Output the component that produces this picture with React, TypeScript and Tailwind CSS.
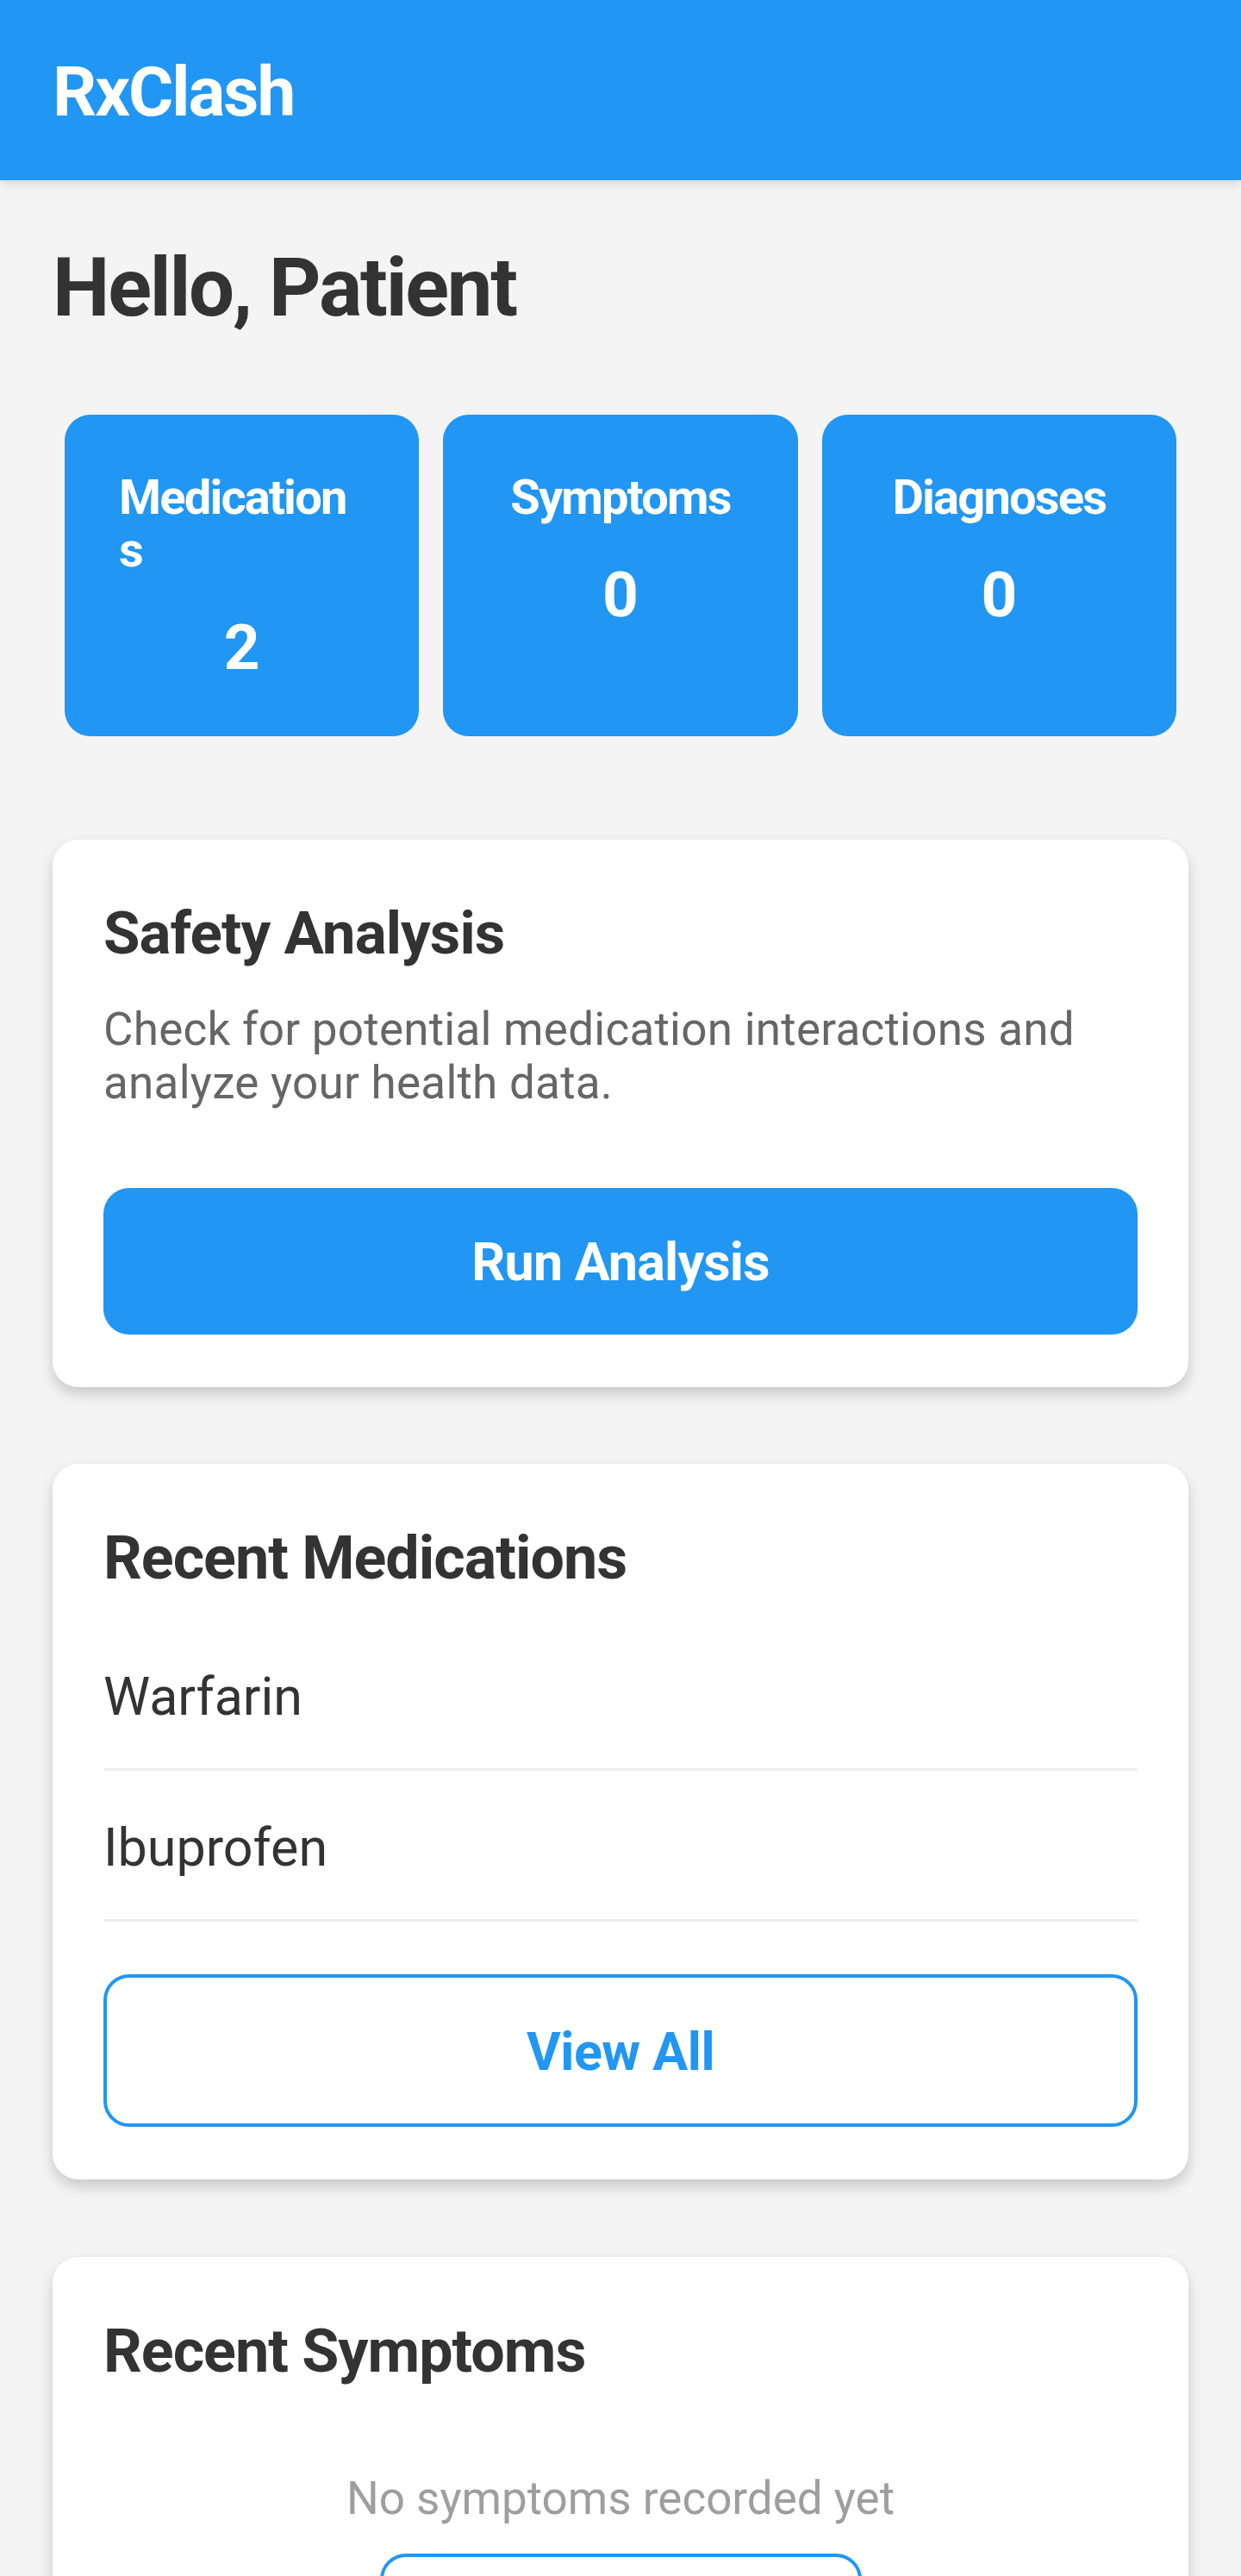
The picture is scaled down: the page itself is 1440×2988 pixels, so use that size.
import React from "react";

function StatCard({ label, value }: { label: string; value: string }) {
  return (
    <div className="flex-1 mx-[14px] bg-[#2196F3] rounded-[30px] px-[63px] pt-[66px] pb-[60px] flex flex-col items-center">
      <div className="max-w-full break-all text-left text-white font-bold text-[56px] leading-[61px] tracking-[-1.8px]">{label}</div>
      <div className="mt-[40px] text-white font-bold text-[73px] leading-[85px]">{value}</div>
    </div>
  );
}

function Card({ children, className = "" }: { children: React.ReactNode; className?: string }) {
  return (
    <div className={"bg-white rounded-[30px] px-[59px] pt-[68px] pb-[61px] shadow-[0_8px_16px_rgba(0,0,0,0.18)] " + className}>
      {children}
    </div>
  );
}

export default function App() {
  return (
    <div className="min-h-[3200px] bg-[#f4f4f4] font-[Roboto,sans-serif]">
      <header className="relative z-10 h-[209px] bg-[#2196F3] flex items-center pl-[61px] pt-[4px] shadow-[0_4px_10px_rgba(0,0,0,0.12)]">
        <h1 className="text-white font-bold text-[80px] leading-[94px] tracking-[-2px]">RxClash</h1>
      </header>

      <main className="px-[61px] pt-[70px] pb-[100px]">
        <h2 className="text-[#333333] font-bold text-[94px] leading-[110px] tracking-[-2.2px]">Hello, Patient</h2>

        <div className="mt-[92px] flex">
          <StatCard label="Medications" value="2" />
          <StatCard label="Symptoms" value="0" />
          <StatCard label="Diagnoses" value="0" />
        </div>

        <Card className="mt-[120px]">
          <h3 className="text-[#333333] font-bold text-[69px] leading-[81px] tracking-[-0.9px]">Safety Analysis</h3>
          <p className="mt-[40px] text-[#666666] text-[53px] leading-[62px] tracking-[0.25px]">
            Check for potential medication interactions and analyze your health data.
          </p>
          <button className="mt-[91px] w-full h-[170px] pt-[4px] rounded-[30px] bg-[#2196F3] text-white font-bold text-[61px] tracking-[-0.8px] flex items-center justify-center">
            Run Analysis
          </button>
        </Card>

        <Card className="mt-[89px]">
          <h3 className="text-[#333333] font-bold text-[70px] leading-[82px] tracking-[-1px]">Recent Medications</h3>
          <ul className="mt-[31px]">
            {["Warfarin", "Ibuprofen"].map((m) => (
              <li key={m} className="pt-[53px] pb-[47px] border-b-[3px] border-[#eeeeee] text-[#333333] text-[61px] leading-[72px]">
                {m}
              </li>
            ))}
          </ul>
          <button className="mt-[61px] w-full h-[177px] pt-[4px] rounded-[30px] border-[4px] border-[#2196F3] bg-white text-[#2196F3] font-bold text-[61px] tracking-[-0.5px] flex items-center justify-center">
            View All
          </button>
        </Card>

        <Card className="mt-[90px]">
          <h3 className="text-[#333333] font-bold text-[70px] leading-[82px] tracking-[-1px]">Recent Symptoms</h3>
          <div className="mt-[99px] flex flex-col items-center">
            <p className="text-[#9e9e9e] text-[53px] leading-[62px]">No symptoms recorded yet</p>
            <button className="mt-[33px] w-[559px] h-[177px] pt-[4px] rounded-[30px] border-[4px] border-[#2196F3] bg-white text-[#2196F3] font-bold text-[61px] tracking-[-0.5px] flex items-center justify-center">
              Add Symptom
            </button>
          </div>
        </Card>
      </main>
    </div>
  );
}
